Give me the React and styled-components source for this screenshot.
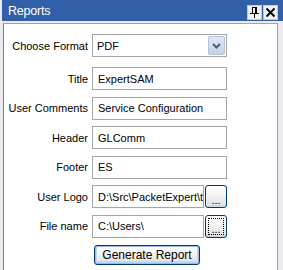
import React from "react";
import styled, { createGlobalStyle } from "styled-components";

const Global = createGlobalStyle`
  html, body { margin: 0; padding: 0; background: #ebebef; }
  body { font-family: Tahoma, "Liberation Sans", Arial, sans-serif; }
`;

const Window = styled.div`
  width: 283px;
  height: 270px;
  background: #ebebef;
  display: flex;
  flex-direction: column;
  overflow: hidden;
`;

const TitleBar = styled.div`
  height: 21px;
  margin-left: 2px;
  background: #3160a9;
  display: flex;
  align-items: center;
  padding: 0 5px 0 6px;
  color: #fff;
  font-family: "Liberation Sans", Arial, sans-serif;
  font-size: 12.5px;
  letter-spacing: -0.2px;
`;

const TitleText = styled.span`
  flex: 1;
  padding-top: 1px;
`;

const CaptionButtons = styled.div`
  display: flex;
  gap: 1px;
  margin-top: 3px;
`;

const CaptionButton = styled.div`
  width: 15px;
  height: 15px;
  background: #f2f2f2;
  border: 1px solid #c8c8c8;
  box-sizing: border-box;
  display: flex;
  align-items: center;
  justify-content: center;
`;

const Panel = styled.div`
  flex: 1;
  margin: 2px 5px 0 3px;
  background: #fff;
  border: 1px solid #a4a4a4;
  border-left-color: #7a7a7a;
  border-bottom: none;
  padding-top: 10px;
`;

const Form = styled.div`
  display: grid;
  grid-template-columns: 84px 135px;
  column-gap: 4px;
  row-gap: 6.5px;
  align-items: center;
  font-family: "Liberation Sans", Arial, sans-serif;
  font-size: 11px;
  color: #000;
`;

const Label = styled.div`
  text-align: right;
  white-space: nowrap;
  margin-top: ${(p) => p.$top || 0}px;
`;

const Field = styled.div`
  display: flex;
  gap: 1px;
  height: 23px;
  margin-top: ${(p) => p.$top || 0}px;
`;

const TextBox = styled.input`
  flex: 1;
  min-width: 0;
  height: 23px;
  box-sizing: border-box;
  border: 1px solid #a5a5a5;
  background: #fff;
  padding: 0 0 0 5px;
  margin: 0;
  font: inherit;
  color: #000;
  outline: none;
`;

const Select = styled.div`
  flex: 1;
  display: flex;
  box-sizing: border-box;
  height: 23px;
  border: 1px solid #a5a5a5;
  background: #fff;
`;

const SelectValue = styled.div`
  flex: 1;
  display: flex;
  align-items: center;
  padding-left: 4px;
`;

const DropButton = styled.div`
  width: 17px;
  margin: 1px;
  box-sizing: border-box;
  border: 1px solid #b4c2d6;
  border-radius: 2px;
  background: linear-gradient(#dfe9f7, #c2d3ec);
  display: flex;
  align-items: center;
  justify-content: center;
`;

const XPButton = styled.button`
  box-sizing: border-box;
  margin: 0;
  padding: 0;
  border: 1px solid #003c74;
  border-radius: 3px;
  background: linear-gradient(#ffffff 0%, #f3f3ef 45%, #e4e5ea 85%, #c9d2e2 100%);
  font: inherit;
  color: #000;
  display: flex;
  align-items: center;
  justify-content: center;
`;

const Browse = styled(XPButton)`
  width: 22px;
  height: 23px;
  padding-top: 6px;
  position: relative;
  &::after {
    content: "";
    display: ${(p) => (p.$focus ? "block" : "none")};
    position: absolute;
    inset: 2px;
    border: 1px dotted #000;
  }
`;

const Generate = styled(XPButton)`
  grid-column: 2;
  justify-self: start;
  margin: 1px 0 0 2px;
  width: 106px;
  height: 20px;
  box-shadow: inset 0 0 0 1px #9ab8ef, inset 0 -1px 0 2px #c3d4f5;
  font-size: 12px;
`;

const PinIcon = () => (
  <svg width="11" height="11" viewBox="0 0 11 11" shapeRendering="crispEdges">
    <path d="M3.5 0.5h4v6h-4z" fill="none" stroke="#000" strokeWidth="1" />
    <rect x="6" y="0" width="2" height="7" fill="#000" />
    <rect x="1" y="6" width="9" height="1" fill="#000" />
    <rect x="5" y="7" width="1" height="4" fill="#000" />
  </svg>
);

const CloseIcon = () => (
  <svg width="11" height="11" viewBox="0 0 11 11">
    <path d="M1.5 1.5l8 8M9.5 1.5l-8 8" stroke="#000" strokeWidth="1.9" />
  </svg>
);

const Chevron = () => (
  <svg width="9" height="6" viewBox="0 0 9 6">
    <path d="M1 1l3.5 3.5L8 1" fill="none" stroke="#4d5d7a" strokeWidth="2" />
  </svg>
);

const rows = [
  ["Title", "ExpertSAM"],
  ["User Comments", "Service Configuration"],
  ["Header", "GLComm"],
  ["Footer", "ES"],
];

export default function App() {
  return (
    <>
      <Global />
      <Window>
        <TitleBar>
          <TitleText>Reports</TitleText>
          <CaptionButtons>
            <CaptionButton><PinIcon /></CaptionButton>
            <CaptionButton><CloseIcon /></CaptionButton>
          </CaptionButtons>
        </TitleBar>
        <Panel>
          <Form>
            <Label>Choose Format</Label>
            <Field>
              <Select>
                <SelectValue>PDF</SelectValue>
                <DropButton><Chevron /></DropButton>
              </Select>
            </Field>
            {rows.map(([label, value], i) => (
              <React.Fragment key={label}>
                <Label $top={i === 0 ? 3.5 : 0}>{label}</Label>
                <Field $top={i === 0 ? 3.5 : 0}>
                  <TextBox readOnly value={value} />
                </Field>
              </React.Fragment>
            ))}
            <Label>User Logo</Label>
            <Field>
              <TextBox readOnly value="D:\Src\PacketExpert\templates\logo.bmp" />
              <Browse>...</Browse>
            </Field>
            <Label>File name</Label>
            <Field>
              <TextBox readOnly value="C:\Users\" />
              <Browse $focus>...</Browse>
            </Field>
            <Generate>Generate Report</Generate>
          </Form>
        </Panel>
      </Window>
    </>
  );
}
